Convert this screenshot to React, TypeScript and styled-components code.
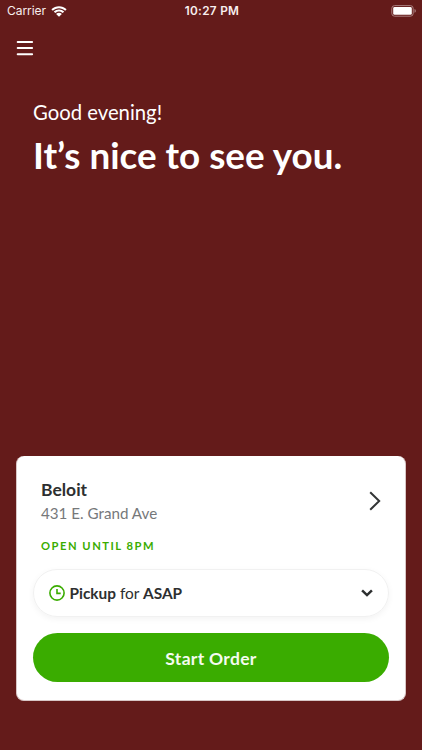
import React from "react";
import styled, { createGlobalStyle } from "styled-components";

const GlobalStyle = createGlobalStyle`
  * { box-sizing: border-box; }
  body { margin: 0; background: #641b1a; }
  button { font: inherit; border: 0; padding: 0; background: none; cursor: pointer; }
  svg { display: block; flex: none; }
`;

const Screen = styled.main`
  display: flex;
  flex-direction: column;
  width: 100%;
  height: 100vh;
  min-height: 750px;
  background: #641b1a;
  color: #fff;
  font-family: Lato, sans-serif;
  overflow: hidden;
`;

const StatusBar = styled.header`
  display: grid;
  grid-template-columns: 1fr auto 1fr;
  align-items: center;
  height: 22px;
  padding: 0 5px 0 7px;
  font-family: Inter, sans-serif;
  color: #f8eeee;
`;

const Carrier = styled.div`
  display: flex;
  align-items: center;
  gap: 5px;
  font-size: 12px;
  line-height: 22px;
  letter-spacing: -0.05px;
`;

const Clock = styled.time`
  font-size: 11.8px;
  line-height: 22px;
  font-weight: 600;
  letter-spacing: 0.3px;
`;

const Battery = styled.div`
  justify-self: end;
`;

const NavBar = styled.nav`
  display: flex;
  padding: 18px 16px 0;
  height: 52px;
`;

const MenuButton = styled.button`
  display: block;
  width: 18px;
  height: 16px;
`;

const Greeting = styled.section`
  display: flex;
  flex-direction: column;
  padding: 25px 33px 0;
`;

const Salutation = styled.p`
  margin: 0;
  font-size: 20.3px;
  line-height: 26px;
`;

const Headline = styled.h1`
  margin: 7px 0 0;
  font-size: 36.8px;
  line-height: 46px;
  font-weight: 700;
  white-space: nowrap;
`;

const OrderCard = styled.section`
  display: flex;
  flex-direction: column;
  margin: auto 16px 49px;
  height: 245px;
  padding: 23px 16px 18px;
  border: 1px solid #d8c6c6;
  border-top-width: 0;
  border-radius: 8px;
  background: #fff;
  color: #2d2f30;
`;

const Location = styled.div`
  display: flex;
  justify-content: space-between;
  padding: 0 8px;
  height: 90px;
`;

const StoreName = styled.h2`
  margin: 0;
  font-size: 17.5px;
  line-height: 22px;
  font-weight: 700;
`;

const Address = styled.p`
  margin: 1px 0 0;
  color: #76787a;
  font-size: 15.2px;
  line-height: 22px;
`;

const Hours = styled.p`
  margin: 15px 0 0;
  color: #3aac00;
  font-size: 11.2px;
  line-height: 14px;
  font-weight: 700;
  letter-spacing: 1.52px;
`;

const StoreArrow = styled.div`
  padding-top: 11.5px;
`;

const PickupButton = styled.button`
  display: flex;
  align-items: center;
  height: 48px;
  padding: 0 15px;
  border: 1px solid #f1f1f1;
  border-radius: 24px;
  box-shadow: 0 2px 6px rgba(0, 0, 0, 0.05);
  color: #2d2f30;
  font-size: 15.4px;
  line-height: 20px;
`;

const PickupText = styled.span`
  flex: 1;
  margin-left: 4.5px;
  text-align: left;
`;

const StartButton = styled.button`
  height: 49px;
  margin-top: 16px;
  border-radius: 25px;
  background: #3aac00;
  color: #f4fbef;
  font-size: 17.5px;
  line-height: 47px;
  padding-top: 2px;
  font-weight: 700;
  letter-spacing: 0.3px;
`;

const WifiIcon = () => (
  <svg width="16" height="12" viewBox="0 0 16 12" fill="#fff">
    <path d="M.4 4.3C4.6.1 11.4.1 15.6 4.3L14.2 5.7C10.8 2.3 5.2 2.3 1.8 5.7Z" />
    <path d="M2.8 6.6C5.7 3.8 10.3 3.8 13.2 6.6L11.8 8C9.7 5.9 6.3 5.9 4.2 8Z" />
    <path d="M5.1 8.9C6.8 7.4 9.2 7.4 10.9 8.9L8 11.7Z" />
  </svg>
);

const BatteryIcon = () => (
  <svg width="26" height="12" viewBox="0 0 26 12">
    <rect x=".8" y=".6" width="21.4" height="10.6" rx="2.8" fill="none" stroke="#aa7f7f" />
    <rect x="2.2" y="2" width="18.6" height="7.8" rx="1.4" fill="#fff" />
    <path d="M23.5 4c1.8.4 1.8 3.4 0 3.8Z" fill="#aa7f7f" />
  </svg>
);

const MenuIcon = () => (
  <svg width="18" height="16" viewBox="0 0 18 16" stroke="#fff" strokeWidth="2" strokeLinecap="round">
    <path d="M1.7 2h14.4M1.7 8h14.4M1.7 14.2h14.4" />
  </svg>
);

const ArrowIcon = () => (
  <svg width="12" height="20" viewBox="0 0 12 20" fill="none" stroke="#333536" strokeWidth="2">
    <path d="m1.2 1.2 9 8.8-9 8.8" />
  </svg>
);

const ClockIcon = () => (
  <svg width="16" height="16" viewBox="0 0 16 16" fill="none" stroke="#3aac00" strokeWidth="1.6">
    <circle cx="8" cy="8" r="7.1" />
    <path d="M8 4.1v4.3h3.7" />
  </svg>
);

const ChevronIcon = () => (
  <svg width="12" height="8" viewBox="0 0 12 8" fill="none" stroke="#2d2f30" strokeWidth="2.5">
    <path d="m1.1 1.3 4.9 4.8 4.9-4.8" />
  </svg>
);

export default function App() {
  return (
    <>
      <GlobalStyle />
      <Screen>
        <StatusBar>
          <Carrier>Carrier<WifiIcon /></Carrier>
          <Clock>10:27 PM</Clock>
          <Battery><BatteryIcon /></Battery>
        </StatusBar>
        <NavBar>
          <MenuButton aria-label="Menu"><MenuIcon /></MenuButton>
        </NavBar>
        <Greeting>
          <Salutation>Good evening!</Salutation>
          <Headline>It’s nice to see you.</Headline>
        </Greeting>
        <OrderCard>
          <Location>
            <div>
              <StoreName>Beloit</StoreName>
              <Address>431 E. Grand Ave</Address>
              <Hours>OPEN UNTIL 8PM</Hours>
            </div>
            <StoreArrow><ArrowIcon /></StoreArrow>
          </Location>
          <PickupButton>
            <ClockIcon />
            <PickupText><b>Pickup</b> for <b>ASAP</b></PickupText>
            <ChevronIcon />
          </PickupButton>
          <StartButton>Start Order</StartButton>
        </OrderCard>
      </Screen>
    </>
  );
}
